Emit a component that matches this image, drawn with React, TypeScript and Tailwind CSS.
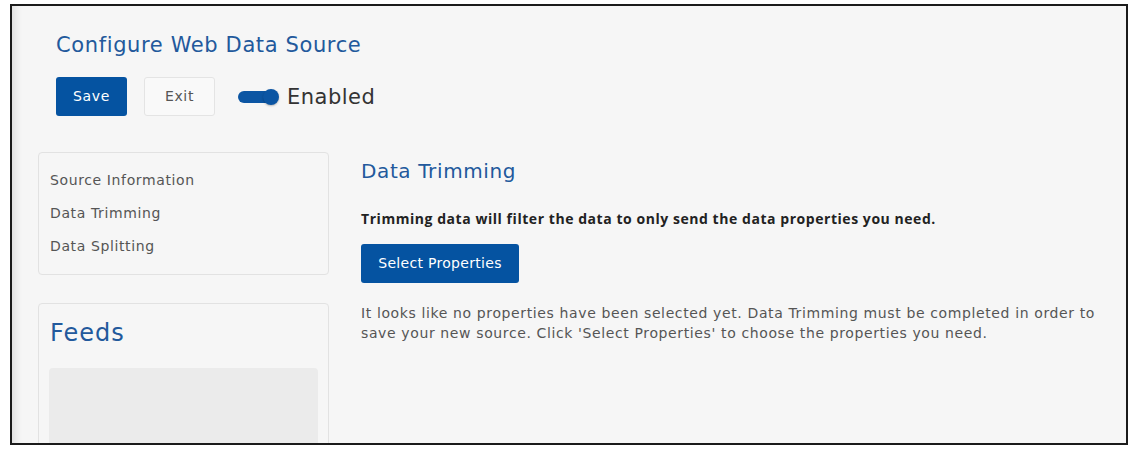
export default function App() {
  const font = { fontFamily: '"DejaVu Sans", "Open Sans", sans-serif' };
  const boldFont = { fontFamily: '"Open Sans", "Liberation Sans", sans-serif' };

  return (
    <div className="w-[1138px] h-[451px] bg-white pt-[4px] pl-[10px] tracking-[0.62px]" style={font}>
      <div className="w-[1118px] h-[441px] border-2 border-[#1b1b1b] bg-[#f6f6f6] overflow-hidden shadow-[inset_10px_0_10px_-8px_rgba(0,0,0,0.12)]">
        {/* Header */}
        <div className="pl-[44px] pt-[25px]">
          <h1 className="text-[21px] leading-[28px] text-[#22599c]">
            Configure Web Data Source
          </h1>

          <div className="mt-[18px] flex items-center">
            <button className="w-[71px] h-[39px] rounded-[3px] bg-[#0553a1] text-white text-[14px]">
              Save
            </button>
            <button className="ml-[17px] w-[71px] h-[39px] rounded-[3px] border border-[#e4e4e4] bg-[#f9f9f9] text-[#555] text-[14px]">
              Exit
            </button>

            {/* Toggle */}
            <div className="ml-[23px] relative w-[41px] h-[16px] flex items-center">
              <div className="w-[36px] h-[12px] rounded-full bg-[#0b55a3]" />
              <div className="absolute right-0 top-0 w-[16px] h-[16px] rounded-full bg-[#0b55a3] shadow-[0_1px_2px_rgba(0,0,0,0.25)]" />
            </div>
            <span className="ml-[8px] text-[21px] leading-[28px] text-[#333] tracking-[0.5px]">Enabled</span>
          </div>
        </div>

        {/* Body */}
        <div className="mt-[36px] pl-[26px] flex gap-[32px]">
          {/* Sidebar */}
          <div className="w-[291px] flex flex-col gap-[28px]">
            <div className="border border-[#e2e2e2] rounded-[4px] pt-[11px] pb-[11px] px-[11px]">
              <ul className="text-[14px] leading-[33px] text-[#555]">
                <li>Source Information</li>
                <li>Data Trimming</li>
                <li>Data Splitting</li>
              </ul>
            </div>

            <div className="border border-[#e2e2e2] rounded-[4px] pt-[13px] px-[10px] h-[200px]">
              <h2 className="text-[24px] leading-[32px] text-[#22599c] pl-[1px] tracking-[1px]">Feeds</h2>
              <div className="mt-[19px] h-[150px] rounded-[4px] bg-[#ebebeb]" />
            </div>
          </div>

          {/* Content */}
          <div className="w-[760px] pt-[5px]">
            <h2 className="text-[20px] leading-[28px] text-[#22599c]">Data Trimming</h2>
            <p
              className="mt-[24px] text-[14px] leading-[20px] font-bold text-[#222] tracking-[0.55px]"
              style={boldFont}
            >
              Trimming data will filter the data to only send the data properties you need.
            </p>
            <button className="mt-[15px] w-[158px] h-[39px] rounded-[3px] bg-[#0553a1] text-white text-[14px] tracking-[0.3px]">
              Select Properties
            </button>
            <p className="mt-[20px] text-[14px] leading-[20px] text-[#555]">
              It looks like no properties have been selected yet. Data Trimming must be completed in order to
              <br />
              save your new source. Click 'Select Properties' to choose the properties you need.
            </p>
          </div>
        </div>
      </div>
    </div>
  );
}
